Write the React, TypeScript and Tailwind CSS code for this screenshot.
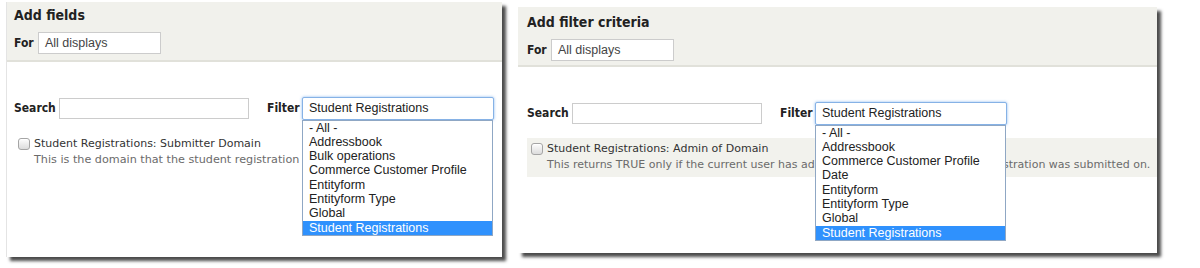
import React from "react"

type PanelProps = {
  title: string
  options: string[]
  label: string
  description: string
  highlighted?: boolean
  className: string
  padX: string
  headTop: string
  descSize: string
}

const boldFont = { fontFamily: '"DejaVu Sans Condensed", "DejaVu Sans", sans-serif' }

function Checkbox() {
  return (
    <span className="mt-[2px] inline-block h-[12px] w-[12px] shrink-0 rounded-[3px] border border-[#a5a5a5] bg-gradient-to-b from-[#fdfdfd] to-[#dcdcdc] shadow-[inset_0_1px_0_#fff]" />
  )
}

function Panel({ title, options, label, description, highlighted, className, padX, headTop, descSize }: PanelProps) {
  return (
    <div className={`relative bg-white shadow-[4px_4px_3px_rgba(0,0,0,0.7)] ${className}`}>
      <div className={`h-[60px] border-b-2 border-[#e1e1da] bg-[#f1f1ec] ${padX} ${headTop}`}>
        <h2 className="text-[14px] font-bold leading-[20px] text-[#222]" style={boldFont}>
          {title}
        </h2>
        <div className="mt-[7px] flex items-center">
          <span className="w-[24px] text-[12px] font-bold text-[#222]" style={boldFont}>
            For
          </span>
          <div className="flex h-[22px] w-[123px] items-center border border-[#ccc] bg-white px-[6px] font-['Liberation_Sans',Arial,sans-serif] text-[12.5px] text-[#444]">
            All displays
          </div>
        </div>
      </div>

      <div className={`${padX} pt-[35px]`}>
        <div className="flex h-[22px] items-center">
          <span className="w-[45px] text-[12px] font-bold text-[#222]" style={boldFont}>
            Search
          </span>
          <div className="h-[21px] w-[190px] border border-[#ccc] bg-white" />
          <span className="ml-[18px] w-[35px] text-[12px] font-bold text-[#222]" style={boldFont}>
            Filter
          </span>
          <div className="relative">
            <div className="flex h-[23px] w-[192px] items-center rounded-[2px] border border-[#86b2e6] bg-white px-[6px] font-['Liberation_Sans',Arial,sans-serif] text-[12.5px] text-[#222] shadow-[0_0_3px_rgba(60,140,230,0.6)]">
              Student Registrations
            </div>
            <ul className="absolute left-0 top-[23px] z-10 w-[191px] border border-[#8fa7c4] bg-white font-['Liberation_Sans',Arial,sans-serif] text-[12.5px] leading-[14.3px] text-[#222]">
              {options.map((option, i) => (
                <li
                  key={option}
                  className={
                    i === options.length - 1
                      ? "bg-[#2f91fd] px-[6px] text-white"
                      : "px-[6px]"
                  }
                >
                  {option}
                </li>
              ))}
            </ul>
          </div>
        </div>

        <div
          className={`mt-[14px] flex h-[39px] gap-[4px] px-[4px] pt-[3px] ${highlighted ? "-mr-[40px] bg-[#f2f2ed]" : ""}`}
        >
          <Checkbox />
          <div className="font-['DejaVu_Sans',sans-serif] whitespace-nowrap">
            <div className="text-[11px] leading-[16px] text-[#333]">{label}</div>
            <div className={`${descSize} leading-[16px] text-[#6b6b6b]`}>{description}</div>
          </div>
        </div>
      </div>
    </div>
  )
}

export default function App() {
  return (
    <div className="h-[268px] w-[1200px] overflow-hidden bg-white">
      <div className="flex items-start">
        <Panel
          className="ml-[6px] mt-[2px] h-[255px] w-[496px] border-l border-[#e4e4e4]"
          padX="px-[7px]"
          headTop="pt-[3px]"
          descSize="text-[11.2px]"
          title="Add fields"
          options={[
            "- All -",
            "Addressbook",
            "Bulk operations",
            "Commerce Customer Profile",
            "Entityform",
            "Entityform Type",
            "Global",
            "Student Registrations",
          ]}
          label="Student Registrations: Submitter Domain"
          description="This is the domain that the student registration was submitted on."
        />
        <Panel
          className="ml-[16px] mt-[7px] h-[246px] w-[639px] overflow-hidden"
          padX="px-[9px]"
          headTop="pt-[5px]"
          descSize="text-[11px]"
          title="Add filter criteria"
          options={[
            "- All -",
            "Addressbook",
            "Commerce Customer Profile",
            "Date",
            "Entityform",
            "Entityform Type",
            "Global",
            "Student Registrations",
          ]}
          label="Student Registrations: Admin of Domain"
          description="This returns TRUE only if the current user has admin access to the domain the registration was submitted on."
          highlighted
        />
      </div>
    </div>
  )
}
